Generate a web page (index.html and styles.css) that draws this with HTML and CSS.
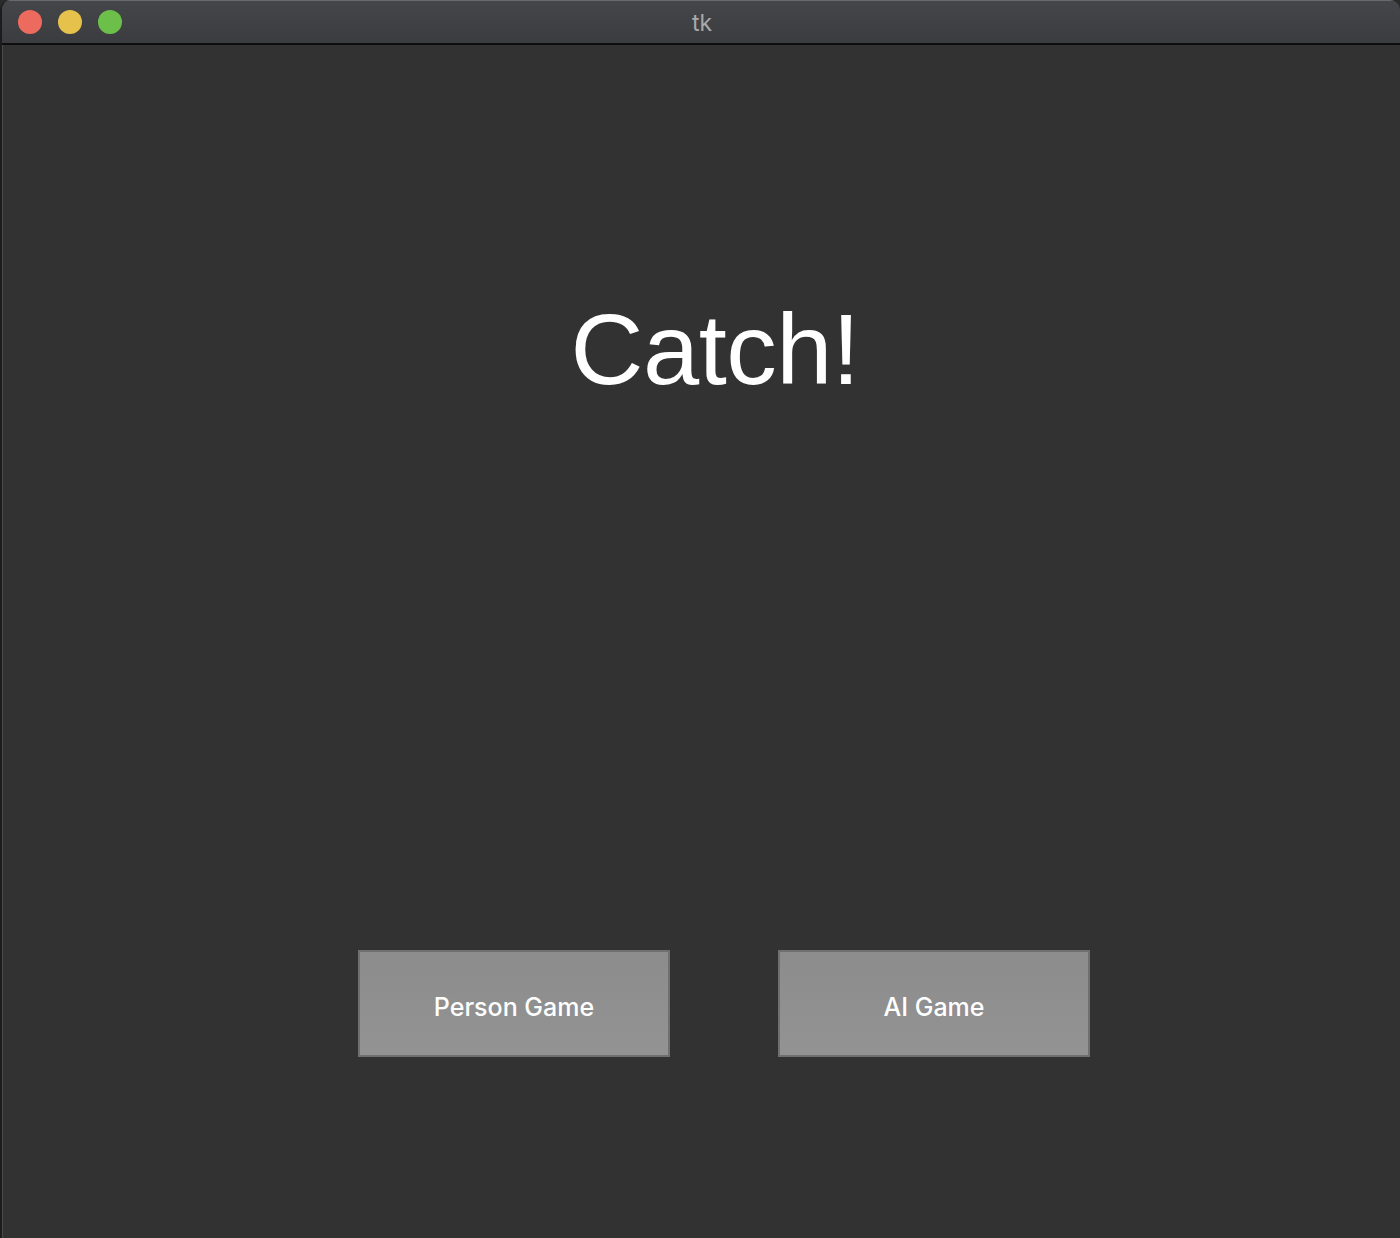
FILE: index.html
```html
<!DOCTYPE html>
<html>
<head>
<meta charset="utf-8">
<link rel="stylesheet" href="styles.css">
<title>tk</title>
</head>
<body>
<div class="window">
  <div class="titlebar">
    <div class="lights">
      <span class="light red"></span>
      <span class="light yellow"></span>
      <span class="light green"></span>
    </div>
    <div class="title">tk</div>
  </div>
  <div class="content">
    <h1 class="heading">Catch!</h1>
    <div class="buttons">
      <button class="btn">Person Game</button>
      <button class="btn">AI Game</button>
    </div>
  </div>
</div>
</body>
</html>
```
FILE: styles.css
```css
html, body {
  margin: 0;
  padding: 0;
  background: #2a2a2a;
}
body {
  width: 1400px;
  height: 1238px;
  overflow: hidden;
}
.window {
  width: 1400px;
  height: 1238px;
  box-sizing: border-box;
  display: flex;
  flex-direction: column;
  border-left: 2px solid #1c1c1c;
  background: #323232;
  border-radius: 10px 10px 0 0;
  overflow: hidden;
  position: relative;
}
.window::before {
  content: "";
  position: absolute;
  left: 0;
  top: 0;
  bottom: 0;
  width: 1px;
  background: #4a4a4a;
}
.titlebar {
  flex: none;
  background: linear-gradient(#45464a, #3b3c3f);
  border-top: 1px solid #6a6a6c;
  border-bottom: 2px solid #0e0e0e;
  display: flex;
  align-items: center;
  position: relative;
  box-sizing: border-box;
  height: 45px;
}
.lights {
  display: flex;
  gap: 16px;
  padding-left: 16px;
  position: absolute;
  left: 0;
  top: 9px;
}
.light {
  width: 24px;
  height: 24px;
  border-radius: 50%;
  display: block;
}
.red { background: #ed6a5e; }
.yellow { background: #e6c14c; }
.green { background: #6cc04a; }
.title {
  flex: 1;
  text-align: center;
  color: #a9a9ab;
  font-family: "Inter", "Liberation Sans", sans-serif;
  font-size: 23px;
  padding-left: 2px;
  margin-top: 1px;
}
.content {
  flex: 1;
  display: flex;
  flex-direction: column;
  align-items: center;
}
.heading {
  margin: 249px 0 0 0;
  font-family: "Liberation Sans", Arial, sans-serif;
  font-weight: normal;
  font-size: 101px;
  line-height: 110px;
  color: #ffffff;
  padding-left: 28px;
  letter-spacing: -0.5px;
}
.buttons {
  margin-top: 546px;
  display: flex;
  gap: 108px;
  padding-left: 46px;
}
.btn {
  width: 312px;
  height: 107px;
  box-sizing: border-box;
  border: 2px solid #6f6f6f;
  background: linear-gradient(#8c8c8c, #939393);
  color: #ffffff;
  font-family: "Inter", "Liberation Sans", sans-serif;
  font-weight: 500;
  font-size: 25px;
  padding: 6px 0 0 0;
  margin: 0;
}
```
